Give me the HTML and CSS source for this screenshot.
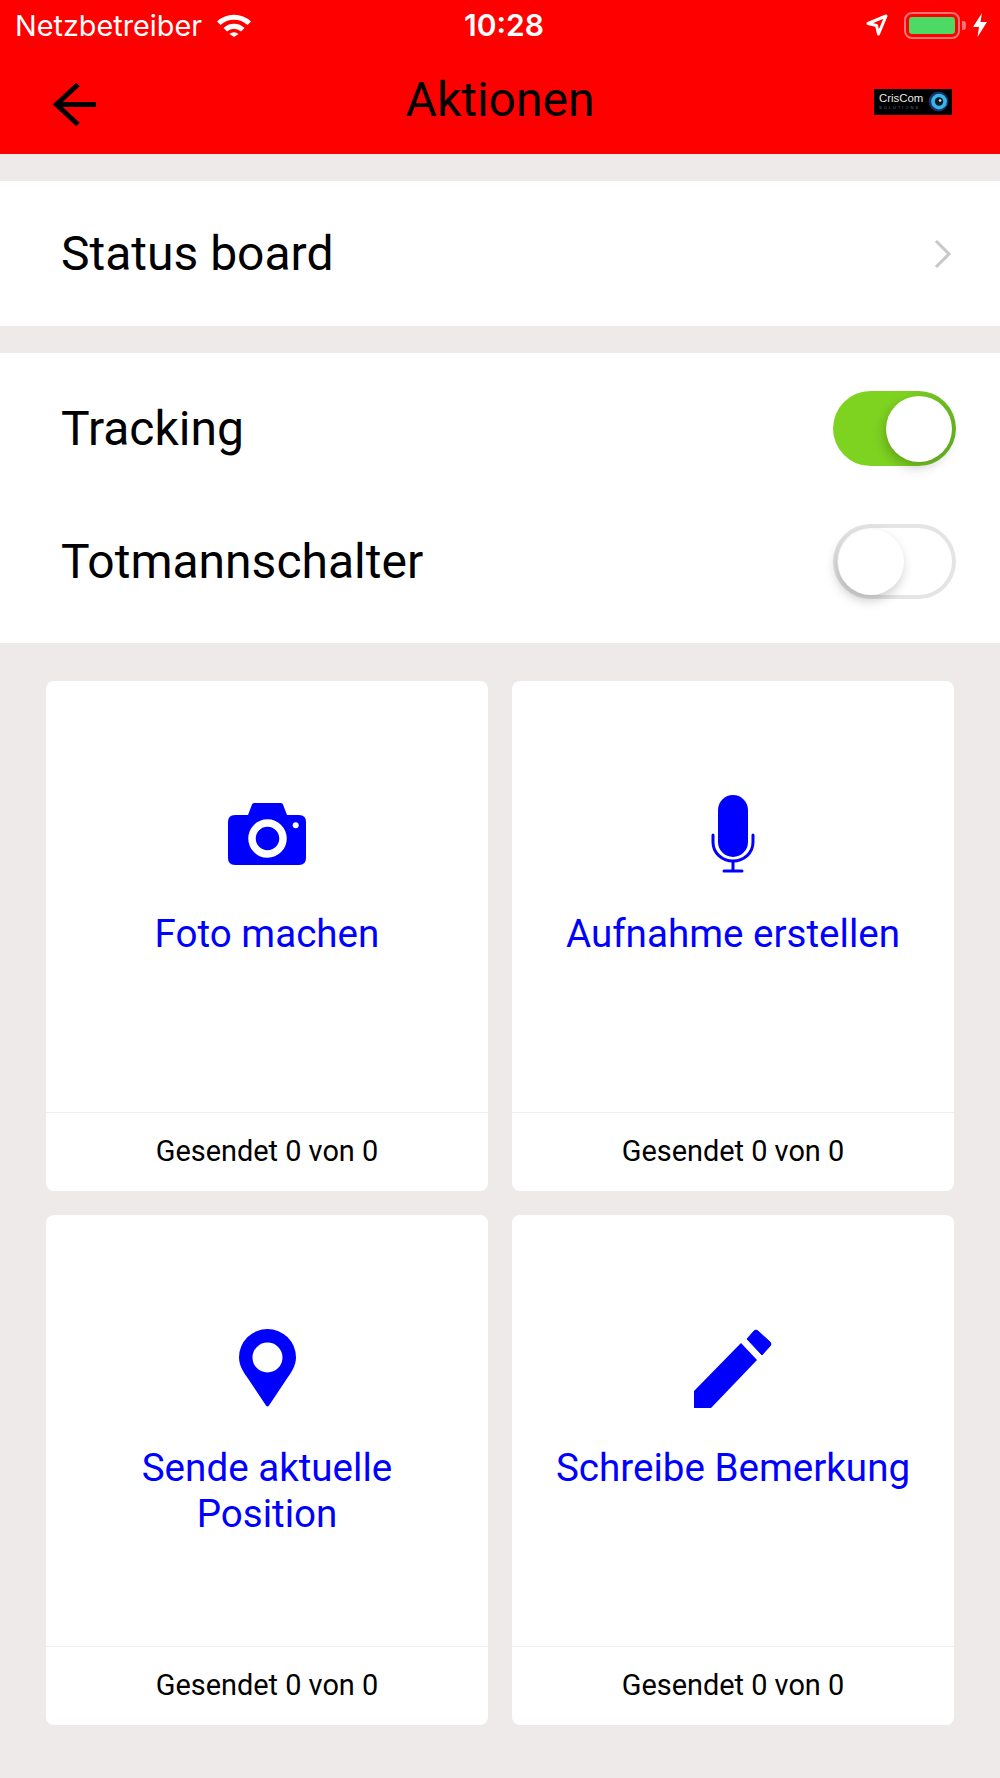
FILE: index.html
```html
<!DOCTYPE html>
<html lang="de">
<head>
    <meta charset="UTF-8">
    <meta name="viewport" content="width=device-width, initial-scale=1.0">
    <title>Aktionen</title>
    <link rel="stylesheet" href="styles.css">
</head>
<body>
    <header class="app-header">
        <div class="status-bar">
            <div class="status-left">
                <span class="carrier">Netzbetreiber</span>
                <svg class="wifi" viewBox="0 0 34 23" width="34" height="23">
                    <path d="M0 7.5 A25 25 0 0 1 34 7.5 L30.5 11 A20 20 0 0 0 3.5 11 Z" fill="#fff"/>
                    <path d="M6.5 14 A15 15 0 0 1 27.5 14 L24 17.5 A10 10 0 0 0 10 17.5 Z" fill="#fff"/>
                    <path d="M12.5 20 A6.5 6.5 0 0 1 21.5 20 L17 23 Z" fill="#fff"/>
                </svg>
            </div>
            <span class="clock">10:28</span>
            <div class="status-right">
                <svg class="locate" viewBox="0 0 22 22" width="22" height="22">
                    <path d="M20 2 L12.5 20 L10.5 11.5 L2 9.5 Z" fill="none" stroke="#fff" stroke-width="3" stroke-linejoin="round"/>
                </svg>
                <div class="battery">
                    <div class="battery-level"></div>
                </div>
                <div class="battery-nub"></div>
                <svg class="bolt" viewBox="0 0 14 24" width="14" height="24">
                    <path d="M9 0 L0 14 H6 L4.5 24 L14 9 H7.5 Z" fill="#fff"/>
                </svg>
            </div>
        </div>
        <nav class="nav-bar">
            <svg class="back" viewBox="0 0 44 44" width="44" height="44">
                <path d="M43 21.5 H4 M25 1.5 L3.5 21.5 L25 41.5" fill="none" stroke="#000" stroke-width="5"/>
            </svg>
            <h1 class="nav-title">Aktionen</h1>
            <div class="logo">
                <div class="logo-text">
                    <span class="logo-name">CrisCom</span>
                    <span class="logo-sub">SOLUTIONS</span>
                </div>
                <svg viewBox="0 0 20 20" width="21" height="21">
                    <circle cx="10" cy="10" r="9.5" fill="#1b2f6b"/>
                    <circle cx="10.5" cy="10" r="7.5" fill="#35b6e6"/>
                    <circle cx="10.5" cy="10" r="4" fill="#0a1626"/>
                    <circle cx="11.5" cy="9" r="1.2" fill="#cfeefa"/>
                </svg>
            </div>
        </nav>
    </header>

    <main>
        <section class="panel panel-status">
            <span class="row-label">Status board</span>
            <svg class="chevron" viewBox="0 0 18 30" width="18" height="30">
                <path d="M2 2 L15 15 L2 28" fill="none" stroke="#c7c7cc" stroke-width="3"/>
            </svg>
        </section>

        <section class="panel panel-toggles">
            <div class="toggle-row">
                <span class="row-label">Tracking</span>
                <div class="toggle toggle-on"><div class="knob"></div></div>
            </div>
            <div class="toggle-row">
                <span class="row-label">Totmannschalter</span>
                <div class="toggle"><div class="knob"></div></div>
            </div>
        </section>

        <section class="cards">
            <article class="card">
                <div class="card-body">
                    <div class="card-icon">
                        <svg viewBox="0 0 78 62" width="78" height="62">
                            <path d="M24 1.5 Q24.500 0 26 0 H53 Q54.500 0 55 1.500 L59 12 H71 Q78 12 78 19 V55 Q78 62 71 62 H7 Q0 62 0 55 V19 Q0 12 7 12 H20 Z" fill="#00f"/>
                            <circle cx="39.500" cy="35.500" r="15.500" fill="none" stroke="#fff" stroke-width="7.500"/>
                            <circle cx="67.700" cy="22.300" r="3" fill="#fff"/>
                        </svg>
                    </div>
                    <h2 class="card-title">Foto machen</h2>
                </div>
                <div class="card-foot">Gesendet 0 von 0</div>
            </article>

            <article class="card">
                <div class="card-body">
                    <div class="card-icon">
                        <svg viewBox="0 0 44 79" width="44" height="79">
                            <rect x="7" y="0" width="30" height="62" rx="15" fill="#00f"/>
                            <path d="M2 40 V47 C2 58 11 66 22 66 C33 66 42 58 42 47 V40 M22 66 V76 M13 76 H31" fill="none" stroke="#00f" stroke-width="3" stroke-linecap="round"/>
                        </svg>
                    </div>
                    <h2 class="card-title">Aufnahme erstellen</h2>
                </div>
                <div class="card-foot">Gesendet 0 von 0</div>
            </article>

            <article class="card">
                <div class="card-body">
                    <div class="card-icon">
                        <svg viewBox="0 0 57 78" width="57" height="78">
                            <path d="M28.500 0 A28.500 28.500 0 0 1 57 28.500 C57 37 52 44 47 51 L30 76.500 Q28.500 78.500 27 76.500 L10 51 C5 44 0 37 0 28.500 A28.500 28.500 0 0 1 28.500 0 Z" fill="#00f"/>
                            <circle cx="28.500" cy="28.500" r="15" fill="#fff"/>
                        </svg>
                    </div>
                    <h2 class="card-title">Sende aktuelle Position</h2>
                </div>
                <div class="card-foot">Gesendet 0 von 0</div>
            </article>

            <article class="card">
                <div class="card-body">
                    <div class="card-icon">
                        <svg viewBox="0 0 78 79" width="78" height="79">
                            <path d="M0 62 L47 14 L63 31 L17 79 H0 Z" fill="#00f"/>
                            <path d="M53 10 L60 2 Q62 0 64 2 L76 13 Q78 15 76 17 L68 26 Z" fill="#00f" stroke="#00f" stroke-width="1" stroke-linejoin="round"/>
                        </svg>
                    </div>
                    <h2 class="card-title">Schreibe Bemerkung</h2>
                </div>
                <div class="card-foot">Gesendet 0 von 0</div>
            </article>
        </section>
    </main>
</body>
</html>
```

FILE: styles.css
```css
* {
    box-sizing: border-box;
}

body {
    margin: 0;
    height: 1778px;
    background-color: #eeeaea;
    font-family: Roboto, sans-serif;
    color: #000;
}

.app-header {
    height: 154px;
    background-color: #f00;
}

.status-bar {
    display: grid;
    grid-template-columns: 1fr auto 1fr;
    align-items: center;
    height: 50px;
    padding: 0 7px 0 15px;
    color: #fff;
}

.status-left {
    display: flex;
    align-items: center;
    gap: 15px;
}

.carrier {
    font-family: Inter, sans-serif;
    font-size: 28.800px;
}

.clock {
    font-family: Inter, sans-serif;
    font-size: 30px;
    font-weight: 600;
}

.status-right {
    display: flex;
    align-items: center;
    justify-content: flex-end;
    padding-right: 6px;
}

.locate {
    margin-right: 16px;
}

.battery {
    width: 56px;
    height: 27px;
    padding: 3px;
    border: 2px solid rgba(255, 255, 255, 0.45);
    border-radius: 8px;
}

.battery-level {
    height: 100%;
    background-color: #4cd964;
    border-radius: 3px;
}

.battery-nub {
    width: 4px;
    height: 9px;
    margin-left: 2px;
    background-color: rgba(255, 255, 255, 0.45);
    border-radius: 0 3px 3px 0;
}

.bolt {
    margin-left: 7px;
}

.nav-bar {
    display: grid;
    grid-template-columns: 1fr auto 1fr;
    align-items: center;
    height: 104px;
    padding: 0 48px 5px 48px;
}

.back {
    display: block;
    margin: 10px 0 0 5px;
}

.nav-title {
    margin: 0;
    font-size: 48px;
    font-weight: 400;
}

.logo {
    display: flex;
    align-items: center;
    justify-content: space-between;
    justify-self: end;
    width: 78px;
    height: 26px;
    margin-top: 4px;
    padding: 0 3px 0 5px;
    background-color: #000;
}

.logo-text {
    display: flex;
    flex-direction: column;
    font-family: "Liberation Sans", sans-serif;
}

.logo-name {
    color: #e8e8e8;
    font-size: 11.400px;
    line-height: 13px;
}

.logo-sub {
    color: #3f7f9f;
    font-size: 4px;
    line-height: 6px;
    letter-spacing: 2px;
}

.panel {
    background-color: #fff;
}

.panel-status {
    display: flex;
    align-items: center;
    justify-content: space-between;
    height: 145px;
    margin-top: 27px;
    padding: 0 48px 0 61px;
}

.panel-toggles {
    height: 290px;
    margin-top: 27px;
    padding: 9px 44px 15px 61px;
}

.row-label {
    font-size: 48px;
}

.chevron {
    display: block;
}

.toggle-row {
    display: flex;
    align-items: center;
    justify-content: space-between;
    height: 133px;
}

.toggle {
    display: flex;
    align-items: center;
    width: 123px;
    height: 75px;
    padding: 0 5px;
    border-radius: 38px;
    background-color: #fff;
    box-shadow: inset 0 0 0 4px #e4e4e4;
}

.toggle-on {
    justify-content: flex-end;
    padding: 0 4px;
    background: linear-gradient(90deg, #7ed321 0%, #7ed321 60%, #68b822 100%);
    box-shadow: none;
}

.knob {
    width: 66px;
    height: 66px;
    border-radius: 50%;
    background-color: #fff;
    box-shadow: -2px 5px 12px rgba(0, 0, 0, 0.22);
}

.cards {
    display: grid;
    grid-template-columns: 442px 442px;
    grid-auto-rows: 510px;
    gap: 24px;
    margin-top: 38px;
    padding: 0 46px;
}

.card {
    display: flex;
    flex-direction: column;
    background-color: #fff;
    border-radius: 8px;
}

.card-body {
    flex: 1;
    padding-top: 103px;
    text-align: center;
}

.card-icon {
    display: flex;
    align-items: center;
    justify-content: center;
    height: 100px;
}

.card-icon svg {
    display: block;
}

.card-title {
    margin: 27px 40px 0;
    color: #00f;
    font-size: 38.600px;
    font-weight: 400;
    line-height: 46px;
}

.card-foot {
    height: 79px;
    border-top: 1px solid #eeeeee;
    font-size: 28.900px;
    line-height: 77px;
    text-align: center;
}
```
